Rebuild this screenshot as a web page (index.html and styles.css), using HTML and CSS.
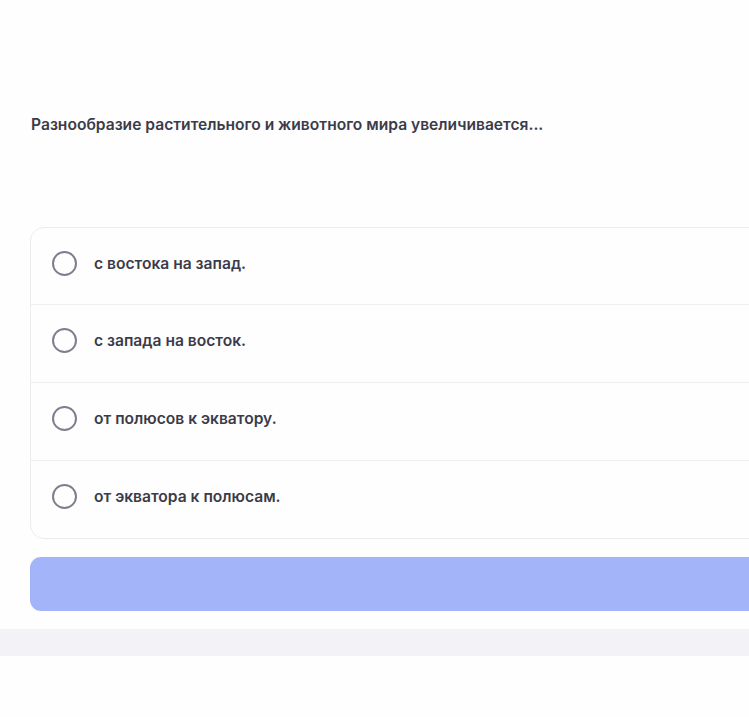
FILE: index.html
```html
<!DOCTYPE html>
<html lang="ru">
<head>
<meta charset="utf-8">
<link rel="stylesheet" href="styles.css">
</head>
<body>
<div class="page">
  <div class="content">
    <p class="question">Разнообразие растительного и животного мира увеличивается...</p>
    <div class="options">
      <label class="option"><span class="radio"></span><span class="label">с востока на запад.</span></label>
      <label class="option"><span class="radio"></span><span class="label">с запада на восток.</span></label>
      <label class="option"><span class="radio"></span><span class="label">от полюсов к экватору.</span></label>
      <label class="option"><span class="radio"></span><span class="label">от экватора к полюсам.</span></label>
    </div>
    <div class="submit"></div>
  </div>
  <div class="band"></div>
</div>
</body>
</html>
```
FILE: styles.css
```css
html, body {
  margin: 0;
  padding: 0;
  background: #fefefe;
  overflow: hidden;
}
body {
  font-family: Inter, "Noto Sans", sans-serif;
  width: 749px;
  height: 717px;
}
.page {
  width: 749px;
  overflow: hidden;
}
.content {
  width: 800px;
  padding: 115px 0 0 30px;
}
.question {
  margin: 0;
  font-size: 15.6px;
  line-height: 20px;
  font-weight: 600;
  color: #3b3b49;
  padding-left: 1px;
}
.options {
  margin-top: 92px;
  border: 1px solid #ececf0;
  border-radius: 14px;
  background: #fefefe;
}
.option {
  display: flex;
  align-items: center;
  box-sizing: border-box;
  height: 78px;
  padding-left: 21px;
  padding-bottom: 6px;
  border-top: 1px solid #eeeef2;
}
.option:first-child {
  border-top: none;
  height: 76px;
}
.radio {
  width: 21px;
  height: 21px;
  border: 2.5px solid #7f7e8f;
  border-radius: 50%;
  flex: none;
}
.label {
  margin-left: 17px;
  font-size: 15.6px;
  font-weight: 600;
  color: #3b3b49;
}
.submit {
  margin-top: 18px;
  height: 54px;
  border-radius: 11px;
  background: #a3b5f8;
}
.band {
  margin-top: 18px;
  height: 27px;
  background: #f3f3f7;
}
```
